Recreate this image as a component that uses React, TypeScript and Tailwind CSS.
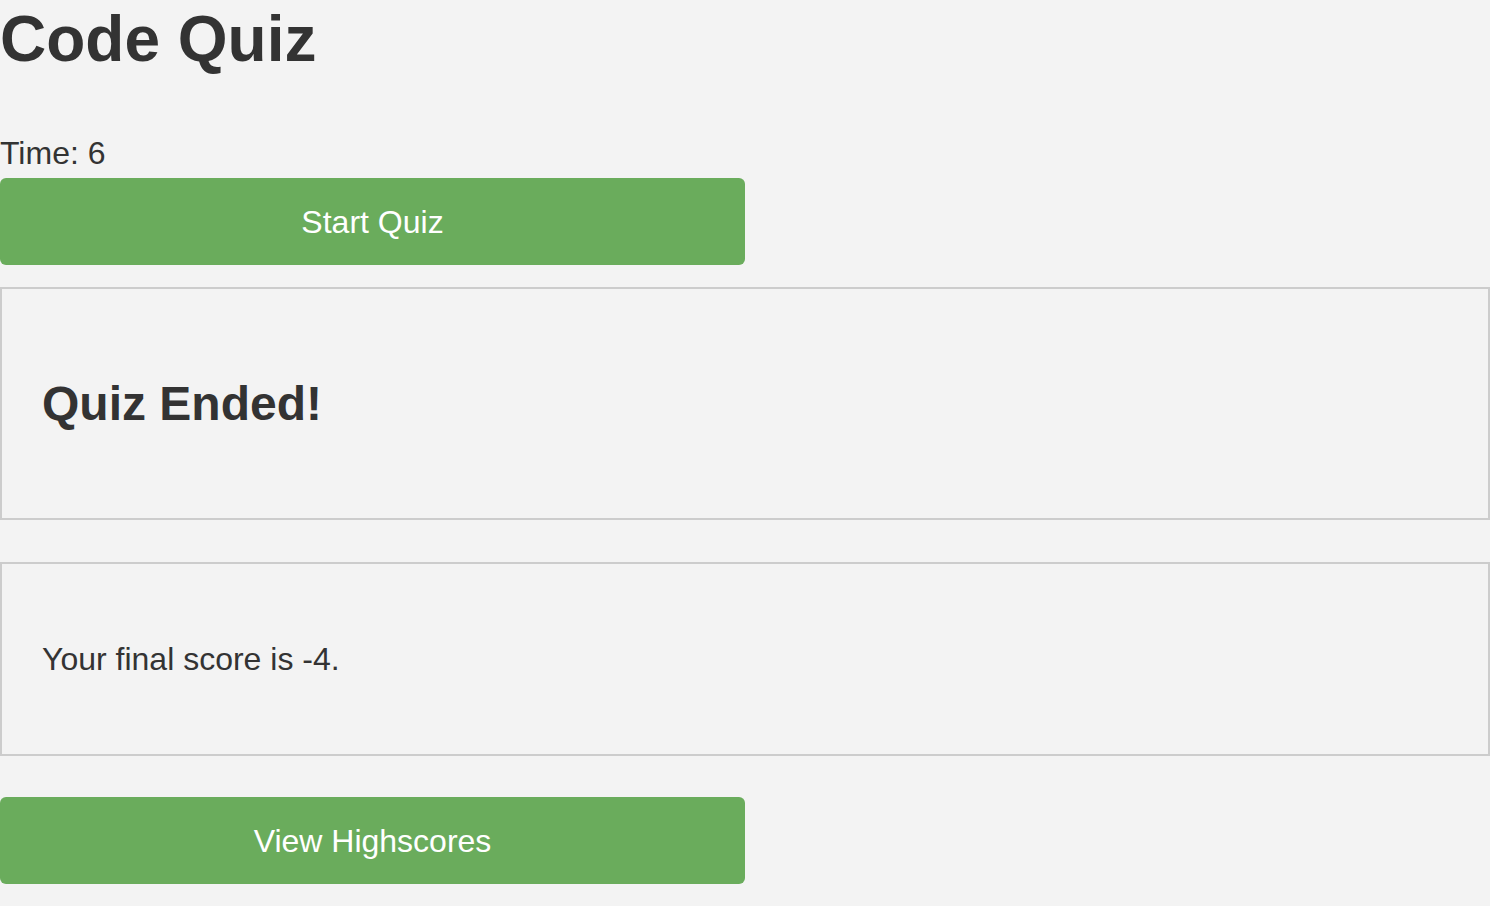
import React from "react";

export default function App() {
  return (
    <div
      className="min-h-screen w-full bg-[#f3f3f3] text-[#333333]"
      style={{ fontFamily: '"Liberation Sans", Arial, Helvetica, sans-serif' }}
    >
      <h1 className="m-0 pt-[2px] text-[64px] font-bold leading-[74px]">Code Quiz</h1>
      <div className="mt-[59px] text-[32px] leading-[37px]">Time: 6</div>
      <button className="mt-[6px] flex h-[87px] w-1/2 items-center justify-center rounded-[6px] bg-[#6aac5c] text-[32px] text-white">
        Start Quiz
      </button>
      <div className="mt-[22px] flex h-[233px] items-center border-2 border-[#cccccc] px-[40px]">
        <h2 className="m-0 text-[48px] font-bold leading-[55px]">Quiz Ended!</h2>
      </div>
      <div className="mt-[42px] flex h-[194px] items-center border-2 border-[#cccccc] px-[40px]">
        <p className="m-0 text-[32px] leading-[37px]">Your final score is -4.</p>
      </div>
      <button className="mt-[41px] flex h-[87px] w-1/2 items-center justify-center rounded-[6px] bg-[#6aac5c] text-[32px] text-white">
        View Highscores
      </button>
    </div>
  );
}
